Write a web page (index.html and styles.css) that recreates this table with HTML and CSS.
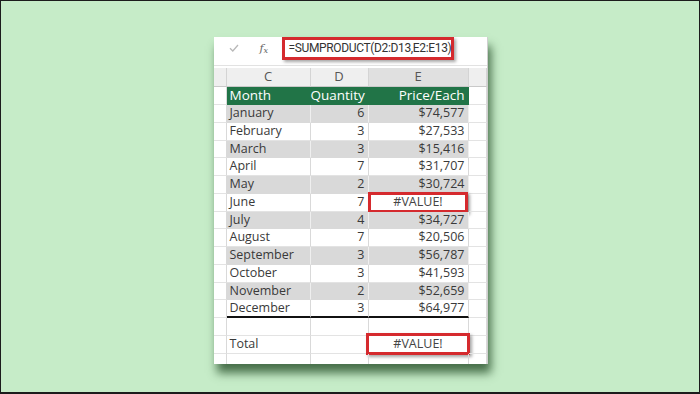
FILE: index.html
```html
<!DOCTYPE html>
<html>
<head>
<meta charset="utf-8">
<link rel="stylesheet" href="styles.css">
</head>
<body>
<div class="frame">
  <div class="sheet">
    <div class="fbar">
      <span class="check"><svg width="10" height="8" viewBox="0 0 10 8"><path d="M1 4.2 L3.8 7 L9 1" fill="none" stroke="#b8b8b8" stroke-width="1.3"/></svg></span>
      <span class="fx">f<sub>x</sub></span>
      <div class="formula">=SUMPRODUCT(D2:D13,E2:E13)</div>
    </div>
    <div class="row colhead">
      <div class="c stub"></div>
      <div class="c mid">C</div>
      <div class="c mid">D</div>
      <div class="c mid sel">E</div>
      <div class="c"></div>
    </div>
    <div class="row thead">
      <div class="c stub"></div>
      <div class="c l">Month</div>
      <div class="c r">Quantity</div>
      <div class="c r">Price/Each</div>
      <div class="c"></div>
    </div>
    <div class="row data g"><div class="c stub"></div><div class="c l">January</div><div class="c r">6</div><div class="c r">$74,577</div><div class="c"></div></div>
    <div class="row data"><div class="c stub"></div><div class="c l">February</div><div class="c r">3</div><div class="c r">$27,533</div><div class="c"></div></div>
    <div class="row data g"><div class="c stub"></div><div class="c l">March</div><div class="c r">3</div><div class="c r">$15,416</div><div class="c"></div></div>
    <div class="row data"><div class="c stub"></div><div class="c l">April</div><div class="c r">7</div><div class="c r">$31,707</div><div class="c"></div></div>
    <div class="row data g"><div class="c stub"></div><div class="c l">May</div><div class="c r">2</div><div class="c r">$30,724</div><div class="c"></div></div>
    <div class="row data"><div class="c stub"></div><div class="c l">June</div><div class="c r">7</div><div class="c ctr err"><span class="box"></span>#VALUE!</div><div class="c"></div></div>
    <div class="row data g"><div class="c stub"></div><div class="c l">July</div><div class="c r">4</div><div class="c r">$34,727</div><div class="c"></div></div>
    <div class="row data"><div class="c stub"></div><div class="c l">August</div><div class="c r">7</div><div class="c r">$20,506</div><div class="c"></div></div>
    <div class="row data g"><div class="c stub"></div><div class="c l">September</div><div class="c r">3</div><div class="c r">$56,787</div><div class="c"></div></div>
    <div class="row data"><div class="c stub"></div><div class="c l">October</div><div class="c r">3</div><div class="c r">$41,593</div><div class="c"></div></div>
    <div class="row data g"><div class="c stub"></div><div class="c l">November</div><div class="c r">2</div><div class="c r">$52,659</div><div class="c"></div></div>
    <div class="row data last"><div class="c stub"></div><div class="c l">December</div><div class="c r">3</div><div class="c r">$64,977</div><div class="c"></div></div>
    <div class="row data"><div class="c stub"></div><div class="c l"></div><div class="c r"></div><div class="c r"></div><div class="c"></div></div>
    <div class="row data"><div class="c stub"></div><div class="c l">Total</div><div class="c r"></div><div class="c ctr err big"><span class="box"></span>#VALUE!</div><div class="c"></div></div>
    <div class="row data tail"><div class="c stub"></div><div class="c"></div><div class="c"></div><div class="c"></div><div class="c"></div></div>
  </div>
</div>
</body>
</html>
```

FILE: styles.css
```css
* { box-sizing: border-box; }
html, body { margin: 0; padding: 0; }
body { width: 700px; height: 394px; overflow: hidden; font-family: "Open Sans", "Noto Sans", sans-serif; }
.frame {
  width: 700px; height: 394px;
  background: #c6ecc8;
  border: 1px solid #1c1c1c;
  border-bottom-width: 2px;
  display: flex; justify-content: center; align-items: flex-start;
  padding: 36px 0 0 1px;
}
.sheet {
  width: 274px;
  background: #fff;
  border-right: 1px solid #cfcfcf;
  box-shadow: 3px 9px 9px rgba(30, 70, 32, 0.75);
}
.fbar {
  height: 29px;
  display: flex; align-items: flex-start;
  border-bottom: 1px solid #e2e2e2;
}
.check { width: 14px; margin: 7px 0 0 15px; height: 10px; display: flex; }
.fx { font-family: "DejaVu Serif", serif; font-style: italic; font-size: 11px; color: #666; margin: 5px 0 0 17px; width: 22px; }
.fx sub { font-size: 8px; vertical-align: -1px; }
.formula {
  flex: none;
  width: 172px; height: 23px;
  border: 3px solid #d52a2e;
  box-shadow: 2px 2px 3px rgba(0,0,0,0.35);
  font-family: Roboto, "Open Sans", sans-serif;
  font-size: 12px; color: #333;
  padding-left: 4px; line-height: 16px;
  white-space: nowrap; letter-spacing: -0.35px;
}
.row {
  display: grid;
  grid-template-columns: 13px 84px 58px 100px 1fr;
  height: 17.75px;
}
.c {
  border-right: 1px solid #d9d9d9;
  border-bottom: 1px solid #e3e3e3;
  font-size: 12.5px; color: #3a3a3a;
  line-height: 16px; white-space: nowrap;
  position: relative;
}
.l { padding-left: 3px; }
.r { text-align: right; padding-right: 3px; }
.ctr { text-align: center; }
.colhead { height: 19px; background: #efefef; margin-top: 2px; }
.colhead .c { border-bottom: 1px solid #c9c9c9; border-right: 1px solid #d4d4d4; color: #555; font-size: 13px; line-height: 17px; }
.colhead .sel { background: #e0e0e0; }
.mid { text-align: center; }
.thead { height: 18px; }
.thead .c:nth-child(2), .thead .c:nth-child(3), .thead .c:nth-child(4) {
  background: #217447; color: #fff; font-size: 13.5px; border-right-color: #217447; border-bottom-color: #217447;
}
.thead .c { line-height: 17px; }
.g .c:nth-child(2), .g .c:nth-child(3), .g .c:nth-child(4) { background: #d9d9d9; border-right-color: #efefef; border-bottom-color: #d9d9d9; }
.last .c:nth-child(2), .last .c:nth-child(3), .last .c:nth-child(4) { border-bottom: 2px solid #111; }
.tail { height: 10px; }
.tail .c { border-bottom: none; }
.err { color: #444; }
.box {
  position: absolute; left: -1px; right: 0; top: -2px; bottom: -2px;
  border: 3px solid #d52a2e;
  box-shadow: 2px 2px 3px rgba(0,0,0,0.35);
}
.big .box { left: -3px; right: -2px; top: -3px; bottom: -2px; }
```
